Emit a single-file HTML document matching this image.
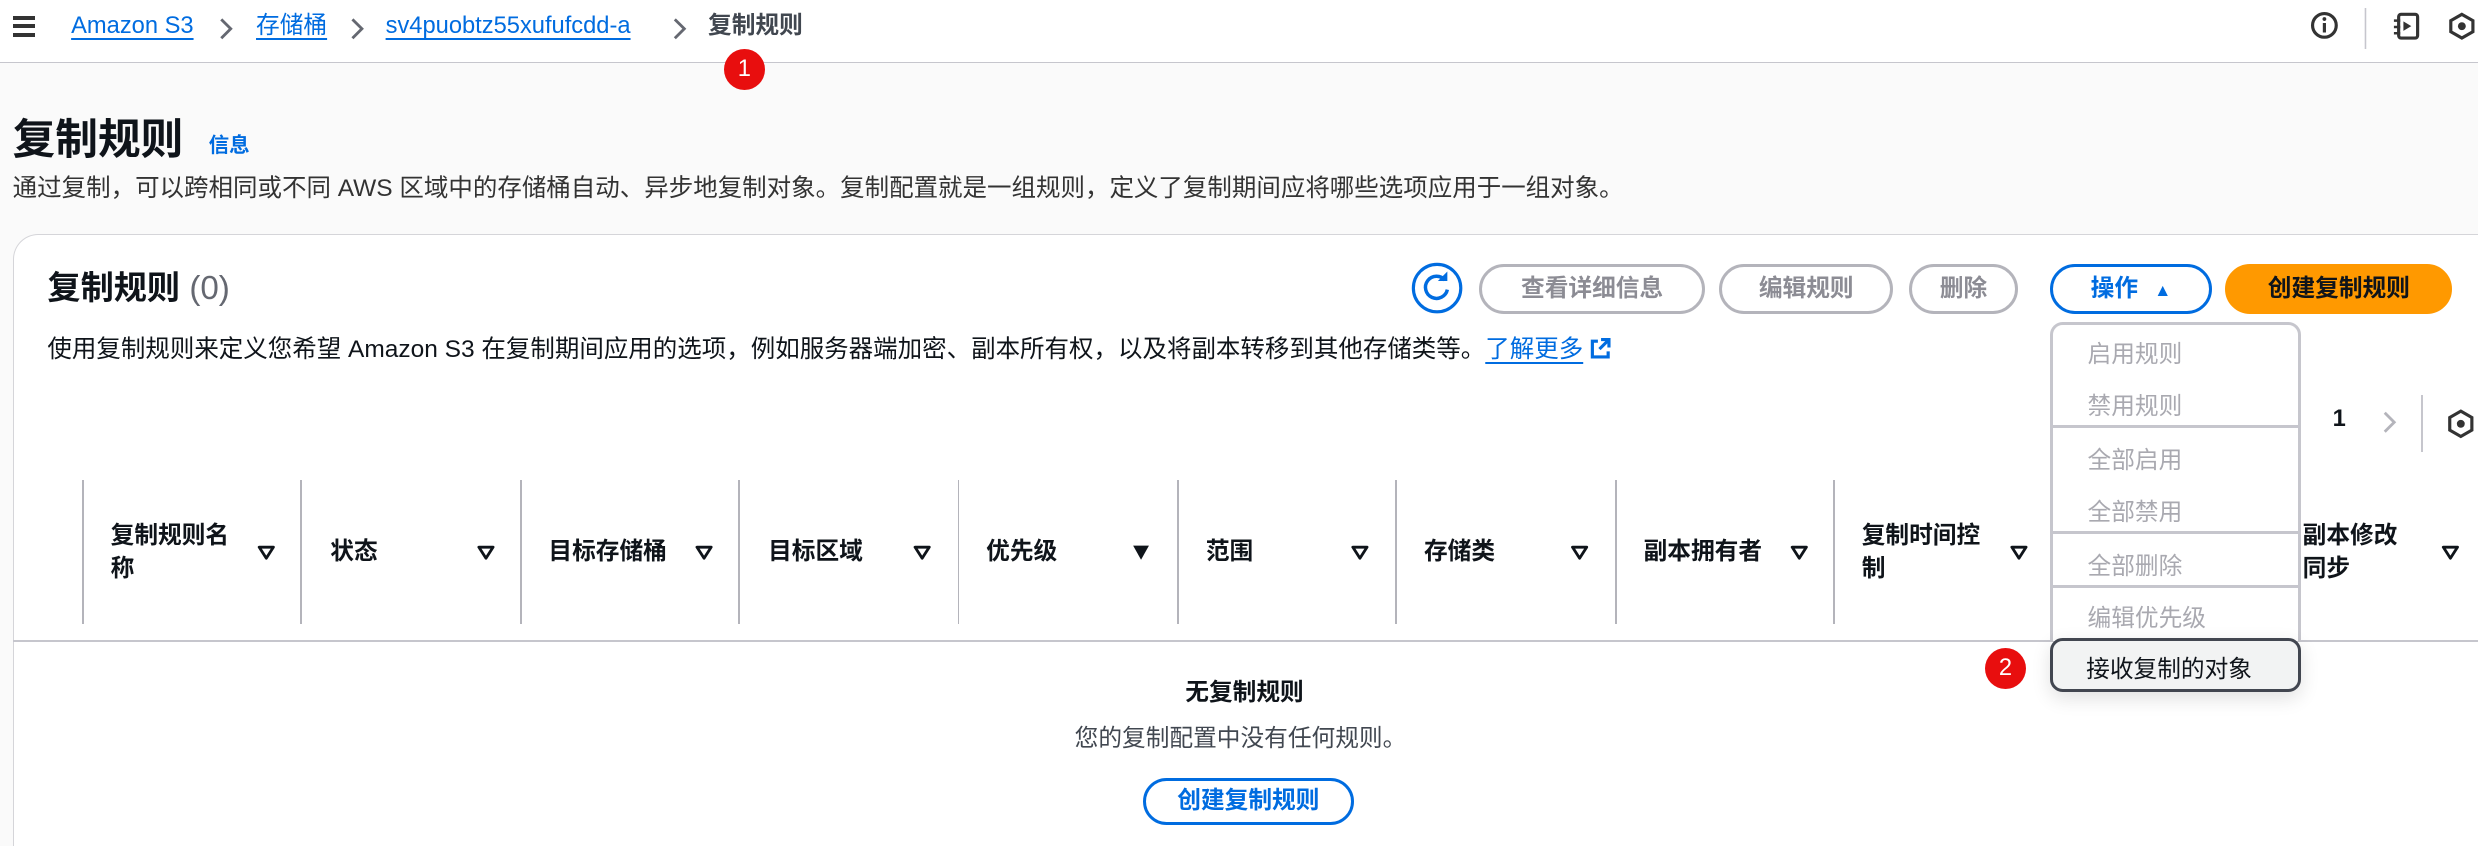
<!DOCTYPE html>
<html><head><meta charset="utf-8"><style>
html,body{margin:0;padding:0;}
html{width:2478px;height:845px;overflow:hidden;background:#fafafa;}
body{zoom:1.5804;width:1568px;height:535px;position:relative;overflow:hidden;font-family:"Liberation Sans","Noto Sans CJK SC",sans-serif;color:#0f141a;background:#fafafa;}
.a{position:absolute;white-space:nowrap;}
.top{position:absolute;left:0;top:0;width:1568px;height:39px;background:#fff;border-bottom:1px solid #c6c6cd;}
.lnk{color:#006ce0;text-decoration:underline;text-underline-offset:3px;}
.bc{font-size:15px;top:7px;line-height:20px;}
.badge{position:absolute;width:26px;height:26px;border-radius:50%;background:#e80e0e;color:#fff;font-size:15px;text-align:center;line-height:26px;}
.card{position:absolute;left:8px;top:148px;width:1580px;height:387px;background:#fff;border:1px solid #d5d5d9;border-bottom:none;border-radius:16px 16px 0 0;}
.btn{position:absolute;top:167px;height:28px;border:2px solid #b4b4bb;border-radius:16px;color:#8c8c94;font-weight:bold;font-size:15px;text-align:center;line-height:28px;background:#fff;box-sizing:content-box;}
.dd{position:absolute;left:1297px;top:204px;width:155px;height:200px;border:2px solid #c6c6cd;border-bottom:none;border-radius:8px 8px 0 0;background:#fff;}
.it{position:absolute;left:22px;color:#a9a9b0;font-size:15px;}
.hs{position:absolute;left:0;width:155px;height:2px;background:#c6c6cd;}
.col{position:absolute;top:304px;height:91px;width:1px;background:#b4b4bb;}
.th{position:absolute;font-weight:bold;font-size:15px;color:#0f141a;line-height:21px;}
</style></head><body>
<div class="top"></div>
<div class="a" style="left:8px;top:10px;">
<div style="width:14px;height:2.5px;background:#333;margin-bottom:3px"></div>
<div style="width:14px;height:2.5px;background:#333;margin-bottom:3px"></div>
<div style="width:14px;height:2.5px;background:#333"></div></div>
<div class="a bc lnk" style="left:45px">Amazon S3</div>
<div class="a bc lnk" style="left:162px">存储桶</div>
<div class="a bc lnk" style="left:244px">sv4puobtz55xufufcdd-a</div>
<div class="a bc" style="left:448px;color:#414750;font-weight:bold">复制规则</div>
<svg class="a" style="left:0;top:8px" width="460" height="20"><g fill="none" stroke="#656871" stroke-width="1.8"><path d="M140 4l6 6-6 6"/><path d="M223 4l6 6-6 6"/><path d="M427 4l6 6-6 6"/></g></svg>
<div class="badge" style="left:458px;top:31px">1</div>
<svg class="a" style="left:1460px;top:5px" width="108" height="26" viewBox="0 0 108 26">
<circle cx="11" cy="11" r="7.5" fill="none" stroke="#333" stroke-width="2"/>
<rect x="10" y="9.5" width="2" height="6" fill="#333"/><circle cx="11" cy="7" r="1.2" fill="#333"/>
<line x1="37" y1="0" x2="37" y2="26" stroke="#c6c6cd"/>
<rect x="58" y="4" width="12" height="15" rx="1.5" fill="none" stroke="#333" stroke-width="2"/>
<path d="M61 8.5l5 3-5 3z" fill="#333"/><path d="M55 8h4M55 12h4M55 16h4" stroke="#333" stroke-width="1.6"/>
<path d="M98 4l7 4v7l-7 4-7-4V8z" fill="none" stroke="#333" stroke-width="2"/><circle cx="98" cy="11.5" r="2.5" fill="#333"/>
</svg>
<div class="a" style="left:8px;top:67px;font-size:27px;font-weight:bold;">复制规则</div>
<div class="a" style="left:132px;top:81px;font-size:13px;font-weight:bold;color:#006ce0">信息</div>
<div class="a" style="left:8px;top:107px;font-size:15.5px;color:#333">通过复制，可以跨相同或不同 AWS 区域中的存储桶自动、异步地复制对象。复制配置就是一组规则，定义了复制期间应将哪些选项应用于一组对象。</div>
<div class="card"></div>
<div class="a" style="left:30px;top:165px;font-size:21px;font-weight:bold;">复制规则 <span style="font-weight:normal;color:#656871">(0)</span></div>
<svg class="a" style="left:893px;top:166px" width="33" height="33"><circle cx="16.5" cy="16.5" r="15" fill="#fff" stroke="#006ce0" stroke-width="2"/><path d="M21.5 11.5a7 7 0 1 0 1.5 6" fill="none" stroke="#006ce0" stroke-width="2.2"/><path d="M23 6v6h-6z" fill="#006ce0"/></svg>
<div class="btn" style="left:936px;width:139px">查看详细信息</div>
<div class="btn" style="left:1088px;width:106px">编辑规则</div>
<div class="btn" style="left:1208px;width:65px">删除</div>
<div class="btn" style="left:1297px;width:99px;border-color:#006ce0;color:#006ce0">操作 <span style="font-size:11px;margin-left:6px">▲</span></div>
<div class="btn" style="left:1408px;width:140px;border-color:#ff9900;background:#ff9900;color:#0f141a">创建复制规则</div>
<div class="a" style="left:30px;top:209px;font-size:15.5px;color:#0f141a">使用复制规则来定义您希望 Amazon S3 在复制期间应用的选项，例如服务器端加密、副本所有权，以及将副本转移到其他存储类等。<span class="lnk">了解更多</span> <svg width="13" height="13" viewBox="0 0 13 13" style="vertical-align:-1px"><path d="M5 2H1.5v10h10V8.5" fill="none" stroke="#006ce0" stroke-width="2"/><path d="M7 1h5v5M12 1L6 7" fill="none" stroke="#006ce0" stroke-width="2"/></svg></div>
<div class="a" style="left:1476px;top:257px;font-size:15px;font-weight:bold">1</div>
<svg class="a" style="left:1506px;top:258px" width="12" height="18"><path d="M3 3l6 6-6 6" fill="none" stroke="#b4b4bb" stroke-width="1.8"/></svg>
<div class="a" style="left:1532px;top:250px;width:1px;height:36px;background:#c6c6cd"></div>
<svg class="a" style="left:1547px;top:258px" width="20" height="20"><path d="M10 2l7 4v8l-7 4-7-4V6z" fill="none" stroke="#333" stroke-width="2"/><circle cx="10" cy="10" r="2.5" fill="#333"/></svg>
<div class="col" style="left:52px"></div><div class="col" style="left:190px"></div><div class="col" style="left:329px"></div><div class="col" style="left:467px"></div><div class="col" style="left:606px"></div><div class="col" style="left:745px"></div><div class="col" style="left:883px"></div><div class="col" style="left:1022px"></div><div class="col" style="left:1160px"></div>
<div class="a" style="left:8px;top:405px;width:1568px;height:1px;background:#c6c6cd"></div>
<div class="th" style="left:70px;top:329px">复制规则名<br>称</div>
<div class="th" style="left:209px;top:339px">状态</div>
<div class="th" style="left:347px;top:339px">目标存储桶</div>
<div class="th" style="left:486px;top:339px">目标区域</div>
<div class="th" style="left:624px;top:339px">优先级</div>
<div class="th" style="left:763px;top:339px">范围</div>
<div class="th" style="left:901px;top:339px">存储类</div>
<div class="th" style="left:1040px;top:339px">副本拥有者</div>
<div class="th" style="left:1178px;top:329px">复制时间控<br>制</div>
<div class="th" style="left:1457px;top:329px">副本修改<br>同步</div>
<svg class="a" style="left:0;top:344px" width="1568" height="12">
<g fill="none" stroke="#0f141a" stroke-width="1.8" stroke-linejoin="round">
<path d="M164 2h9l-4.5 7z"/><path d="M303 2h9l-4.5 7z"/><path d="M441 2h9l-4.5 7z"/><path d="M579 2h9l-4.5 7z"/>
<path d="M856 2h9l-4.5 7z"/><path d="M995 2h9l-4.5 7z"/><path d="M1134 2h9l-4.5 7z"/><path d="M1273 2h9l-4.5 7z"/><path d="M1546 2h9l-4.5 7z"/>
</g><path d="M717 1h10l-5 9z" fill="#0f141a"/></svg>
<div class="dd">
<div class="it" style="top:6px">启用规则</div>
<div class="it" style="top:39px">禁用规则</div>
<div class="hs" style="top:63px"></div>
<div class="it" style="top:73px">全部启用</div>
<div class="it" style="top:106px">全部禁用</div>
<div class="hs" style="top:130px"></div>
<div class="it" style="top:140px">全部删除</div>
<div class="hs" style="top:164px"></div>
<div class="it" style="top:173px">编辑优先级</div>
</div>
<div class="a" style="left:1297px;top:404px;width:155px;height:30px;border:2px solid #424650;border-radius:8px;background:#f2f3f3;box-shadow:0 4px 12px rgba(0,0,0,0.12)"></div>
<div class="a" style="left:1320px;top:411px;font-size:15px;color:#0f141a">接收复制的对象</div>
<div class="badge" style="left:1256px;top:410px">2</div>
<div class="a" style="left:750px;top:426px;font-size:15px;font-weight:bold;color:#0f141a">无复制规则</div>
<div class="a" style="left:680px;top:455px;font-size:15px;color:#414750">您的复制配置中没有任何规则。</div>
<div class="a" style="left:723px;top:492px;width:130px;height:26px;border:2px solid #006ce0;border-radius:16px;color:#006ce0;font-weight:bold;font-size:15px;text-align:center;line-height:26px">创建复制规则</div>
</body></html>
